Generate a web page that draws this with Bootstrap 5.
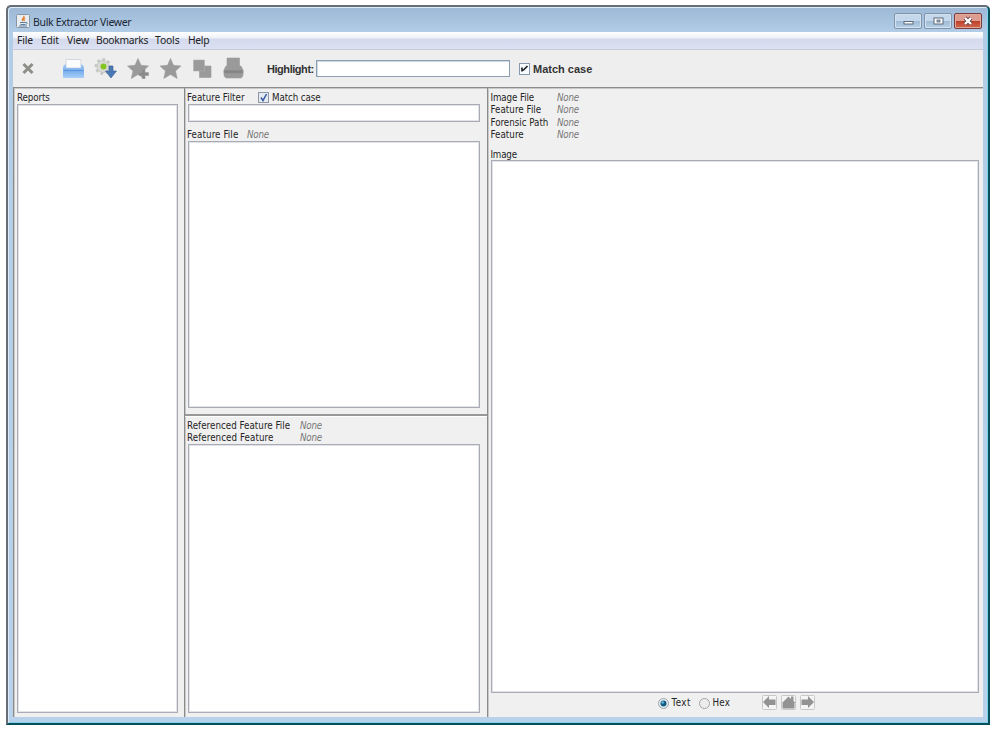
<!DOCTYPE html>
<html lang="en">
<head>
<meta charset="utf-8">
<title>Bulk Extractor Viewer</title>
<link href="https://cdn.jsdelivr.net/npm/bootstrap@5.3.0/dist/css/bootstrap.min.css" rel="stylesheet">
<style>
body{background:#fff;width:995px;height:730px;overflow:hidden;padding:5px 5px 5px 6px;color:#222}
.win{height:720px;width:984px;border:2px solid #666d74;border-right-color:#08515c;border-bottom-color:#08515c;border-radius:5px 5px 0 0;background:linear-gradient(#9cb8d5 0,#b3cde7 26px,#b9d1ea 100%);padding:0 5px 6px;box-shadow:inset 1px 1px #dcebf8,inset -1px -1px #7fd3ea}
.titlebar{height:25px;padding:3px 0 0 3px;font:10.5px/20px "Noto Sans",sans-serif;color:#1c2733}
.titlebar .cap{letter-spacing:-.32px;padding-left:3px;line-height:24px}
.wbtns{margin-top:3px;gap:2px;align-self:flex-start;padding-right:1px}
.wbtn{width:28px;height:16px;border:1px solid #8095ab;border-radius:2px;background:linear-gradient(#c4d7eb 48%,#a0bad5 50%,#b7d0e8);box-shadow:inset 0 0 0 1px #d3e2f1}
.wbtn.shut{border-color:#7c3a3a;background:linear-gradient(#dd9c90 48%,#bd3d28 50%,#d06a50);box-shadow:inset 0 0 0 1px #e3a79c}
.menubar{height:18px;background:linear-gradient(#fff 0,#eef1f9 6px,#d4daed 7px,#dbe1f2 100%);border-bottom:1px solid #c8ccd8;font:10.3px/17px "Noto Sans",sans-serif;letter-spacing:-.12px;padding-left:4px}
.menubar span{flex:none}
.menubar .wide{letter-spacing:-.3px}
.tools{height:37px;background:#eee}
.tools svg{display:block;flex:none}
.bold{font:bold 11px/14px "Liberation Sans",sans-serif;color:#333}
.hl{width:194px;height:17px;border:1px solid #8c9fb2;background:#fff;box-shadow:inset 1px 1px #ccd8e4;margin-top:-1px}
.main{height:630px;background:#f0f0f0}
.pane{border-left:1px solid #8b8b8b;border-top:1px solid #8b8b8b;box-shadow:inset 1px 1px #c9c9c9;font:9.7px/12px "DejaVu Sans Condensed","DejaVu Sans",sans-serif;color:#242424}
.pane .t{display:block;height:12px;white-space:nowrap;letter-spacing:-.1px}
.pane i{font-style:oblique;color:#777;letter-spacing:-.2px;height:12px}
.box{background:#fff;border:1px solid #a9acb5;box-shadow:inset 0 0 0 1px #e1e3e8}
.p1{width:171px;padding:4px 6px 4px 3px}
.p2{width:303px}
.p2a{height:326px;padding:4px 7px 6px 3px}
.p2b{padding:4px 7px 4px 3px;border-top:2px solid #989898;box-shadow:inset 0 1px #fff}
.p2 .t{margin-left:-1px;margin-right:1px}
.p3{padding:4px 4px 3px 3px}
.p3 .t{margin-left:-.5px;margin-right:.5px}
.meta{height:12.4px}
.lab{flex:none}
.rad{flex:none}
.foot{height:21px;padding:0 0 1px 167px}
.nav3{gap:4px;margin-left:30px;margin-top:-1px}
</style>
</head>
<body>
<div class="win d-flex flex-column">
 <div class="titlebar d-flex align-items-start">
  <svg width="14" height="15" viewBox="0 0 14 15" style="margin-top:4px"><rect x=".5" y=".5" width="13" height="13" rx="1" fill="#e9edf1" stroke="#8796a6"/><path d="M7.500 2c2 2-3 2.500-.5 5M9 4c-2 1-1 2-.5 3" fill="none" stroke="#e0812d" stroke-width="1.300"/><path d="M4 8.500h6M4.500 10.500h5M3 12h8M10 8.500c2 0 1.500 1.500 0 1.800" fill="none" stroke="#5b7da0"/></svg>
  <span class="cap">Bulk Extractor Viewer</span>
  <div class="wbtns d-flex ms-auto">
   <div class="wbtn"><svg width="26" height="14" class="d-block"><rect x="9" y="7.500" width="9" height="2.500" fill="#fff" stroke="#5c6b7b"/></svg></div>
   <div class="wbtn"><svg width="26" height="14" class="d-block"><rect x="9" y="4" width="9" height="6" fill="#fff" stroke="#5c6b7b"/><rect x="12" y="6" width="3" height="2" fill="#9fb4cb" stroke="#5c6b7b" stroke-width=".8"/></svg></div>
   <div class="wbtn shut"><svg width="26" height="14" class="d-block"><path d="M10 4l6 6M16 4l-6 6" stroke="#6b4347" stroke-width="4"/><path d="M10 4l6 6M16 4l-6 6" stroke="#fff" stroke-width="2.300"/></svg></div>
  </div>
 </div>
 <div class="menubar d-flex">
  <span style="width:24px">File</span><span style="width:26px">Edit</span><span style="width:29px">View</span><span class="wide" style="width:59px">Bookmarks</span><span style="width:33px">Tools</span><span class="wide">Help</span>
 </div>
 <div class="tools d-flex align-items-center">
  <svg width="235" height="36" viewBox="13 51 235 36">
   <defs><linearGradient id="b" x2="0" y2="1"><stop stop-color="#a9cdf6"/><stop offset=".5" stop-color="#79adec"/><stop offset="1" stop-color="#a8d0fa"/></linearGradient>
   <path id="star" d="M0-10.500 3-3.700 10.500-3 5 2 6.700 9.500 0 5.500-6.700 9.500-5 2-10.500-3-3-3.700z"/></defs>
   <path d="M23.500 64l9 9M32.500 64l-9 9" stroke="#8e8e89" stroke-width="3"/>
   <path d="M66 68V59.500h15V68z" fill="#fbfcfe" stroke="#c3cad4" stroke-width=".7"/><path d="M63 68q0-3 3-4v4h15v-4q3 1 3 4v9q0 1-1 1H64q-1 0-1-1z" fill="url(#b)"/><path d="M64 70.500h19" stroke="#5b95df"/>
   <circle cx="103" cy="66.500" r="6" fill="#d9dad7" stroke="#c3c5c0"/><circle cx="103" cy="66.500" r="7.200" fill="none" stroke="#c3c5c0" stroke-width="2.200" stroke-dasharray="2.800 2.700"/><circle cx="103.500" cy="66.500" r="3" fill="#82c51e"/><path d="M109 66h4v5h3.500l-5.500 7-5.500-7h3.500z" fill="#4978b5" stroke="#365e96" stroke-width=".6"/>
   <g fill="#9a9a9a" stroke="#9a9a9a" stroke-width=".6"><use href="#star" x="138" y="69"/><use href="#star" x="170.500" y="69"/><path d="M142 69.500h3v3h3.500v3h-3.500v3h-3v-3h-3v-3h3z" fill="#8a8a8a"/>
   <path d="M199.500 66h11.500v11.500H199.500z"/><path d="M193.500 60h11v11h-11z" stroke="#b0b0b0"/>
   <path d="M227 58h12.500v9H227z"/><path d="M226 66h15l2 4v5q0 2-2 3h-15q-2-1-2-3v-5z"/><path d="M224 70h19v3.500H224z" fill="#868686"/></g>
  </svg>
  <span class="bold ms-auto" style="width:49px;letter-spacing:-.45px">Highlight:</span>
  <div class="hl"></div>
  <svg width="14" height="14" style="margin:0 1px 0 8px"><rect x="1.500" y="1.500" width="10" height="11" fill="#f8fbfd" stroke="#8799ab"/><path d="M4 5.500v4M5 8.500L9.500 4" stroke="#222" stroke-width="1.700" fill="none"/></svg>
  <span class="bold" style="width:450px">Match case</span>
 </div>
 <div class="main d-flex">
  <div class="pane p1 d-flex flex-column"><span class="t">Reports</span><div class="box flex-grow-1"></div></div>
  <div class="pane p2 d-flex flex-column">
   <div class="p2a d-flex flex-column">
    <div class="d-flex" style="height:12px"><span class="t" style="width:70px;letter-spacing:.03px">Feature Filter</span>
     <svg width="13" height="12" class="lab" style="margin-left:-1px"><rect x="1.500" y=".5" width="10" height="10" fill="#e5eaf1" stroke="#8b98a7"/><path d="M4 5.500l2 3 3.500-6.500" fill="none" stroke="#3457a0" stroke-width="1.500"/></svg><span class="t" style="padding-left:3px">Match case</span></div>
    <div class="box" style="height:18px"></div>
    <div class="d-flex" style="padding-top:7px;height:19px"><span class="t" style="width:59px;letter-spacing:.1px">Feature File</span><i>None</i></div>
    <div class="box flex-grow-1"></div>
   </div>
   <div class="p2b flex-grow-1 d-flex flex-column">
    <div class="d-flex"><span class="t" style="width:112px;letter-spacing:.04px">Referenced Feature File</span><i>None</i></div>
    <div class="d-flex"><span class="t" style="width:112px;letter-spacing:.08px">Referenced Feature</span><i>None</i></div>
    <div class="box flex-grow-1"></div>
   </div>
  </div>
  <div class="pane p3 flex-grow-1 d-flex flex-column">
   <div class="d-flex meta"><span class="t" style="width:66px">Image File</span><i>None</i></div>
   <div class="d-flex meta"><span class="t" style="width:66px;letter-spacing:.05px">Feature File</span><i>None</i></div>
   <div class="d-flex meta"><span class="t" style="width:66px;letter-spacing:0">Forensic Path</span><i>None</i></div>
   <div class="d-flex meta"><span class="t" style="width:66px;letter-spacing:.05px">Feature</span><i>None</i></div>
   <span class="t" style="margin-top:6.400px;line-height:13px;letter-spacing:-.2px">Image</span>
   <div class="box flex-grow-1"></div>
   <div class="foot d-flex align-items-center">
    <svg class="rad" width="11" height="11"><circle cx="5.500" cy="5.500" r="5" fill="#e9edf0" stroke="#9aa3aa"/><circle cx="5.500" cy="5.500" r="3" fill="#165b83"/><circle cx="4.700" cy="4.500" r="1.200" fill="#66c1e4"/></svg>
    <span class="t" style="width:28px;padding-left:3px;letter-spacing:.5px">Text</span>
    <svg class="rad" width="11" height="11" style="margin-left:2px"><circle cx="5.500" cy="5.500" r="5" fill="#ececec" stroke="#a3a6a8"/></svg>
    <span class="t" style="width:22px;padding-left:3px;letter-spacing:.3px">Hex</span>
    <div class="nav3 d-flex">
     <svg width="15" height="15"><rect x=".5" y=".5" width="14" height="14" rx="1" fill="#f5f5f5" stroke="#c8c8c8"/><path d="M1 7L7 1v3.500h6.500v5.500H7v3z" fill="#939393"/></svg>
     <svg width="15" height="15"><rect x=".5" y=".5" width="14" height="14" rx="1" fill="#f5f5f5" stroke="#c8c8c8"/><path d="M1 8l6.500-6.500L10 4V1.500h2.500V6l2 2h-1v5.500h-12V8z" fill="#939393"/></svg>
     <svg width="15" height="15"><rect x=".5" y=".5" width="14" height="14" rx="1" fill="#f5f5f5" stroke="#c8c8c8"/><path d="M14 7L8 1v3.500H1.500v5.500H8v3z" fill="#939393"/></svg>
    </div>
   </div>
  </div>
 </div>
</div>
<script src="https://cdn.jsdelivr.net/npm/bootstrap@5.3.0/dist/js/bootstrap.bundle.min.js"></script>
</body>
</html>
